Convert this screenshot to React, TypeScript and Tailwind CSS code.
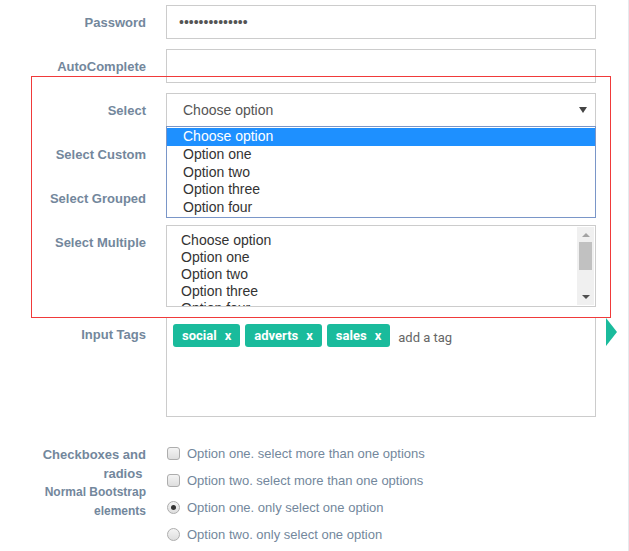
import React from 'react';

const labelCls =
  'w-[146px] shrink-0 text-right pt-[9px] leading-[18px] text-[13px] font-bold text-[#73879c]';

function Row({ label, children, className = '' }: { label: React.ReactNode; children?: React.ReactNode; className?: string }) {
  return (
    <div className={`flex ${className}`}>
      <div className={labelCls}>{label}</div>
      <div className="ml-[20px] w-[430px] relative">{children}</div>
    </div>
  );
}

function Caret() {
  return <span className="w-0 h-0 border-x-[4px] border-x-transparent border-t-[6px] border-t-[#444]" />;
}

function SelectBox({ text = '' }: { text?: string }) {
  return (
    <div className="h-[34px] border border-[#ccc] bg-white flex items-center justify-between pl-[16px] pr-[8px] text-[14px] text-[#555]">
      <span>{text}</span>
      <Caret />
    </div>
  );
}

const options = ['Choose option', 'Option one', 'Option two', 'Option three', 'Option four'];

function Tag({ name }: { name: string }) {
  return (
    <span className="h-[23px] px-[9px] rounded-[3px] bg-[#1abb9c] text-white text-[13px] font-bold flex items-center gap-[8px] font-['Roboto',sans-serif]">
      <span>{name}</span>
      <span>x</span>
    </span>
  );
}

function Check({ radio = false, checked = false, label }: { radio?: boolean; checked?: boolean; label: string }) {
  return (
    <div className="flex items-center h-[27px]">
      <span
        className={`w-[13px] h-[13px] ml-[1px] border border-[#adadad] bg-gradient-to-b from-[#f4f4f4] to-[#dedede] flex items-center justify-center ${
          radio ? 'rounded-full' : 'rounded-[3px]'
        }`}
      >
        {checked && <span className="w-[5px] h-[5px] rounded-full bg-[#333]" />}
      </span>
      <span className="ml-[7px] text-[13px] text-[#73879c]">{label}</span>
    </div>
  );
}

export default function App() {
  return (
    <div className="relative w-[629px] h-[551px] overflow-hidden bg-white font-['Liberation_Sans',Arial,sans-serif]">
      <div className="absolute right-0 top-0 bottom-0 w-[1px] bg-[#e6e9ed]" />

      <div className="pt-[5px] flex flex-col gap-[10px]">
        <Row label="Password">
          <div className="h-[34px] border border-[#ccc] flex items-center pl-[12px] text-[14px] text-[#555]">
            ••••••••••••••
          </div>
        </Row>
        <Row label="AutoComplete">
          <div className="h-[34px] border border-[#ccc]" />
        </Row>
        <Row label="Select">
          <SelectBox text="Choose option" />
          {/* open dropdown */}
          <div className="absolute left-0 top-[33px] w-[430px] z-10 bg-white border border-[#7a96c8] pt-[1px] text-[14px] text-[#333] leading-[17.8px]">
            {options.map((o, i) => (
              <div key={o} className={`pl-[16px] ${i === 0 ? 'bg-[#1e90ff] text-white' : ''}`}>
                {o}
              </div>
            ))}
          </div>
        </Row>
        <Row label="Select Custom">
          <SelectBox />
        </Row>
        <Row label="Select Grouped">
          <SelectBox />
        </Row>
        <Row label="Select Multiple">
          <div className="h-[82px] border border-[#ccc] flex overflow-hidden">
            <div className="flex-1 pl-[14px] pt-[6px] text-[14px] leading-[17px] text-[#333]">
              {options.map((o) => (
                <div key={o}>{o}</div>
              ))}
            </div>
            <div className="w-[17px] my-[1px] mr-[1px] bg-[#f0f0f0] flex flex-col items-center">
              <span className="mt-[6px] w-0 h-0 border-x-[4px] border-x-transparent border-b-[4px] border-b-[#a3a3a3]" />
              <span className="mt-[5px] w-[13px] h-[28px] bg-[#c1c1c1]" />
              <span className="mt-auto mb-[6px] w-0 h-0 border-x-[4px] border-x-transparent border-t-[4px] border-t-[#505050]" />
            </div>
          </div>
        </Row>
        <Row label="Input Tags">
          <div className="h-[100px] border border-[#ccc] pt-[6px] pl-[6px] flex items-start gap-[5px]">
            <Tag name="social" />
            <Tag name="adverts" />
            <Tag name="sales" />
            <span className="ml-[3px] mt-[4px] text-[13px] text-[#666] font-['Roboto',sans-serif]">add a tag</span>
          </div>
        </Row>
        <div className="flex mt-[17px]">
          <div className="w-[146px] shrink-0 text-right font-bold text-[#73879c] leading-[19px] pt-[1px]">
            <div className="text-[13px]">Checkboxes and</div>
            <div className="text-[13px]">radios&nbsp;</div>
            <div className="text-[12px]">Normal Bootstrap</div>
            <div className="text-[12px]">elements</div>
          </div>
          <div className="ml-[20px] -mt-[4px]">
            <Check label="Option one. select more than one options" />
            <Check label="Option two. select more than one options" />
            <Check radio checked label="Option one. only select one option" />
            <Check radio label="Option two. only select one option" />
          </div>
        </div>
      </div>

      {/* highlight box */}
      <div className="absolute left-[31px] top-[76px] w-[580px] h-[242px] border border-[#f03a3a] pointer-events-none z-20" />
      {/* green side arrow */}
      <div className="absolute left-[606px] top-[318px] w-0 h-0 border-y-[14px] border-y-transparent border-l-[11px] border-l-[#1abb9c]" />
    </div>
  );
}
